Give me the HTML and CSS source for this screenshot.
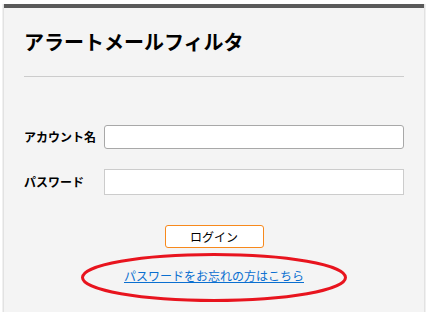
FILE: index.html
```html
<!DOCTYPE html>
<html lang="ja">
<head>
<meta charset="utf-8">
<link rel="stylesheet" href="styles.css">
</head>
<body>
<div class="panel">
  <h1 class="title">アラートメールフィルタ</h1>
  <hr class="rule">
  <form class="form">
    <div class="row row-account">
      <label class="label">アカウント名</label>
      <input class="input input-focus" type="text">
    </div>
    <div class="row row-pass">
      <label class="label">パスワード</label>
      <input class="input" type="password">
    </div>
    <div class="actions">
      <button class="btn" type="button">ログイン</button>
    </div>
    <div class="forgot">
      <a class="link" href="#">パスワードをお忘れの方はこちら</a>
      <svg class="ellipse" width="266" height="49" viewBox="0 0 266 49">
        <ellipse cx="133" cy="24.5" rx="131.5" ry="23" fill="none" stroke="#e8141e" stroke-width="3"/>
      </svg>
    </div>
  </form>
</div>
</body>
</html>
```
FILE: styles.css
```css
html, body {
  margin: 0;
  padding: 0;
  background: #fff;
  height: 100%;
  overflow: hidden;
}
body {
  font-family: "Noto Sans CJK JP", "Noto Sans", sans-serif;
  color: #000;
}
.panel {
  margin: 4px 4px 0;
  width: 420px;
  height: calc(100% - 4px);
  box-sizing: border-box;
  background: #f4f4f4;
  border-top: 4px solid #5a5a5a;
  box-shadow: -1px 0 0 #e2e2e2, 1px 0 0 #e2e2e2, -2px 0 0 #f0f0f0, 2px 0 0 #f0f0f0;
  padding: 0 20px;
}
.title {
  margin: 24px 0 0;
  font-size: 20px;
  line-height: 20px;
  font-weight: bold;
}
.rule {
  margin: 24px 0 0;
  border: 0;
  height: 1px;
  background: #cccccc;
}
.form {
  margin: 0;
}
.row {
  display: flex;
  align-items: center;
}
.row-account {
  margin-top: 48px;
}
.row-pass {
  margin-top: 20px;
}
.label {
  width: 80px;
  font-size: 12px;
  font-weight: bold;
  line-height: 16px;
}
.input {
  flex: 1;
  box-sizing: border-box;
  margin: 0;
  height: 26px;
  border: 1px solid #cccccc;
  background: #fff;
  border-radius: 0;
  padding: 0 4px;
  outline: none;
}
.input-focus {
  height: 24px;
  border-color: #a8a8a8;
  border-radius: 3px;
}
.actions {
  margin-top: 30px;
  display: flex;
  justify-content: center;
}
.btn {
  appearance: none;
  width: 99px;
  height: 23px;
  box-sizing: border-box;
  background: #fff;
  border: 1px solid #f7891c;
  border-radius: 3px;
  font-family: "Noto Sans CJK JP", sans-serif;
  font-size: 12px;
  line-height: 21px;
  padding: 0;
  color: #000;
}
.forgot {
  position: relative;
  margin-top: 19px;
  display: flex;
  justify-content: center;
  line-height: 18px;
}
.link {
  font-size: 12px;
  color: #0a6fd0;
  text-decoration: underline;
}
.ellipse {
  position: absolute;
  left: 57px;
  top: -14px;
}
```
